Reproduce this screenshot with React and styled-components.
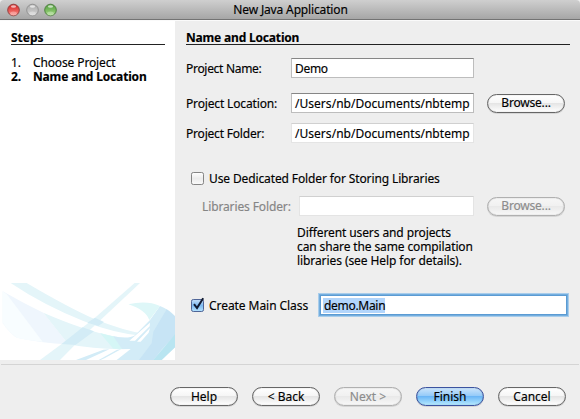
import React from "react";
import styled, { createGlobalStyle } from "styled-components";

const Global = createGlobalStyle`
  * { box-sizing: border-box; }
  body { margin: 0; background: #eee; overflow: hidden; }
`;

const Window = styled.div`
  width: 580px;
  height: 419px;
  display: flex;
  flex-direction: column;
  background: #eee;
  color: #000;
  font: 12px/14px "Noto Sans", "Open Sans", sans-serif;
  -webkit-text-stroke: 0.15px currentColor;
  white-space: nowrap;
`;

const TitleBar = styled.header`
  height: 20px;
  flex: none;
  display: grid;
  grid-template-columns: 64px 1fr 64px;
  align-items: center;
  padding: 0 6px 0 7px;
  border-bottom: 1px solid #737373;
  border-radius: 4px 4px 0 0;
  background: linear-gradient(#cfcfcf, #a6a6a6);
`;

const Lights = styled.div`
  display: flex;
  gap: 5.5px;
`;

const Text = styled.span`
  letter-spacing: ${(p) => p.$ls || 0}px;
  font-weight: ${(p) => (p.$bold ? 700 : 400)};
  color: ${(p) => (p.$dim ? "#858585" : "inherit")};
`;

const Title = styled(Text)`
  justify-self: center;
  line-height: 18px;
  padding-top: 1px;
`;

const Body = styled.div`
  display: flex;
  height: 340px;
  border-top: 1px solid #fafafa;
`;

const Sidebar = styled.aside`
  width: 175px;
  display: flex;
  flex-direction: column;
  background: #fff;
  padding: 10px 10px 0 11px;
`;

const SectionTitle = styled.h2`
  margin: 0;
  height: 14px;
  font-size: 12px;
  line-height: 14px;
  border-bottom: 1px solid #222;
`;

const StepList = styled.ol`
  list-style: none;
  margin: 11px 0 0;
  padding: 0;
`;

const Step = styled.li`
  display: grid;
  grid-template-columns: 22px 1fr;
`;

const Art = styled.svg`
  display: block;
  flex: none;
  margin: auto -10px 0 -11px;
`;

const Main = styled.main`
  flex: 1;
  padding: 10px 10px 0 11px;
`;

const Row = styled.div`
  display: flex;
  align-items: center;
  height: 20px;
  margin-top: ${(p) => p.$top}px;
  padding-left: ${(p) => p.$indent || 0}px;
`;

const Label = styled.label`
  width: ${(p) => p.$w}px;
  flex: none;
  padding-top: 2px;
`;

const Field = styled.div`
  width: ${(p) => p.$w}px;
  height: 20px;
  flex: none;
  padding: 0 3px;
  line-height: 20px;
  overflow: hidden;
  background: #fff;
  border: 1px solid ${(p) => (p.$soft ? "#e4e4e4" : "#bdbdbd")};
  border-top-color: ${(p) => (p.$soft ? "#d0d0d0" : "#868686")};
`;

const FocusField = styled(Field)`
  display: flex;
  align-items: center;
  padding: 0 2px;
  border: 1px solid #5b9bd3;
  box-shadow: 0 0 0 1px #74aede, 0 0 0 2px #a9cdeb;
`;

const Selection = styled(Text)`
  height: 15px;
  line-height: 16px;
  background: #b2d5fb;
  padding-left: 1px;
`;

const faces = {
  normal: ["#666", "#fff 0%, #f6f6f6 45%, #e5e5e5 50%, #fff 100%", "#000"],
  disabled: ["#b0b0b0", "#f6f6f6 0%, #f1f1f1 45%, #e9e9e9 50%, #f8f8f8 100%", "#8c8c8c"],
  primary: ["#3c53a0", "#cbe4fb 0%, #96cbf8 45%, #6bb6f6 50%, #b5e9ff 100%", "#000"],
};

const Button = styled.button`
  width: ${(p) => p.$w || 68}px;
  height: 19px;
  flex: none;
  padding: 0;
  margin-left: ${(p) => p.$left || 0}px;
  border: 1px solid ${(p) => faces[p.$face || "normal"][0]};
  border-radius: 10px;
  background: linear-gradient(${(p) => faces[p.$face || "normal"][1]});
  color: ${(p) => faces[p.$face || "normal"][2]};
  font: inherit;
  line-height: 16px;
  letter-spacing: ${(p) => p.$ls || 0}px;
  box-shadow: inset 0 0 1px rgba(0, 0, 0, 0.4), 0 1px 0 #d6d6d6;
`;

const Note = styled.p`
  margin: 10px 0 0 111px;
  line-height: 14px;
`;

const Line = styled(Text)`
  display: block;
`;

const Footer = styled.footer`
  display: flex;
  gap: 14px;
  margin: 4px 1px 0;
  padding: 22px 13px 0 169px;
  border-top: 1px solid #d4d4d4;
`;

const BoxIcon = styled.svg`
  flex: none;
  display: block;
  margin: 0 5px;
  overflow: visible;
`;

const CheckText = styled(Text)`
  padding-top: 2px;
`;

function Light({ id, edge, top, bottom }) {
  return (
    <svg width="13" height="14" viewBox="0 0 13 14">
      <defs>
        <linearGradient id={id} x2="0" y2="1">
          <stop offset="0" stopColor={top} />
          <stop offset="1" stopColor={bottom} />
        </linearGradient>
      </defs>
      <circle cx="6.5" cy="7" r="5.8" fill={`url(#${id})`} stroke={edge} strokeWidth=".9" />
      <ellipse cx="6.5" cy="3.5" rx="2.6" ry="1.3" fill="#fff" opacity=".65" />
      <ellipse cx="6.5" cy="10.4" rx="3.4" ry="2" fill="#fff" opacity=".3" />
    </svg>
  );
}

function Checkbox({ checked }) {
  const id = checked ? "boxOn" : "boxOff";
  return (
    <BoxIcon width="13" height="13" viewBox="0 0 13 13">
      <defs>
        <linearGradient id={id} x2="0" y2="1">
          <stop offset="0" stopColor={checked ? "#c6dff8" : "#fff"} />
          <stop offset=".5" stopColor={checked ? "#7dbaf2" : "#ececec"} />
          <stop offset="1" stopColor={checked ? "#b6e4ff" : "#fafafa"} />
        </linearGradient>
      </defs>
      <rect x=".5" y=".5" width="12" height="12" rx="1.8" fill={`url(#${id})`} stroke={checked ? "#4f6597" : "#858585"} />
      {checked && <path d="M3 5.2 6 9 12.2-.8" fill="none" stroke="#111b33" strokeWidth="2" />}
    </BoxIcon>
  );
}

function Swirl() {
  return (
    <Art width="175" height="77" viewBox="0 39 525 231">
      <path d="M8 64Q70 100 130 128L205 223Q120 218 50 203Q25 185 8 158Z" fill="#eff6fd" />
      <path d="M8 64L20 72L128 215Q85 212 50 203Q25 185 8 158Z" fill="#f8fdff" />
      <path d="M130 128Q250 180 340 199Q385 208 430 203L392 237Q290 240 205 223Z" fill="#e4f5f9" />
      <path d="M32 39H80Q200 110 285 148Q370 182 435 192V199Q340 190 250 153Q130 105 32 39Z" fill="#e4f5f9" />
      <path d="M404 39H420L260 189L180 270H120L185 222L285 143Z" fill="#e4f5f9" />
      <path d="M285 143L312 156L295 168L262 158ZM248 172L282 184L226 225L185 222Z" fill="#d3ecf6" />
      <path d="M300 189L345 200L366 237L340 236Z" fill="#d5f6f6" />
      <path d="M340 199Q385 208 405 196L450 150L480 108Q510 120 525 139V232L485 270H350L392 237H366Z" fill="#d3ecf7" />
      <path d="M385 103Q440 90 480 108L448 150Q437 120 385 103Z" fill="#def7f8" />
      <path d="M500 118L525 139V195L485 238L460 270H417L455 220L460 185Z" fill="#c7e4f5" />
      <path d="M525 193V232L485 270H460L488 238Z" fill="#b9e5f1" />
      <path d="M450 158L449 169L405 212H388ZM450 174L446 188L422 215H411Z" fill="#fff" />
      <path d="M228 270L310 239L328 238L258 270ZM296 270L350 240L364 237L315 264L302 270Z" fill="#d3ecf7" />
    </Art>
  );
}

export default function App() {
  return (
    <>
      <Global />
      <Window>
        <TitleBar>
          <Lights>
            <Light id="close" edge="#8d3a38" top="#d01c1e" bottom="#ff8f86" />
            <Light id="min" edge="#8d8d8d" top="#a9a9a9" bottom="#d6d6d6" />
            <Light id="zoom" edge="#4b7b3c" top="#4f9a3d" bottom="#a5dc83" />
          </Lights>
          <Title $ls={-0.15}>New Java Application</Title>
        </TitleBar>
        <Body>
          <Sidebar>
            <SectionTitle><Text $bold>Steps</Text></SectionTitle>
            <StepList>
              <Step><Text>1.</Text><Text $ls={-0.13}>Choose Project</Text></Step>
              <Step><Text $bold>2.</Text><Text $bold $ls={-0.16}>Name and Location</Text></Step>
            </StepList>
            <Swirl />
          </Sidebar>
          <Main>
            <SectionTitle><Text $bold $ls={-0.18}>Name and Location</Text></SectionTitle>
            <Row $top={13}>
              <Label $w={105}><Text $ls={-0.3}>Project Name:</Text></Label>
              <Field $w={183}><Text $ls={-0.3}>Demo</Text></Field>
            </Row>
            <Row $top={15}>
              <Label $w={105}><Text $ls={-0.15}>Project Location:</Text></Label>
              <Field $w={183}><Text $ls={0.03}>/Users/nb/Documents/nbtemp</Text></Field>
              <Button $w={78} $left={13} $ls={-0.2}>Browse...</Button>
            </Row>
            <Row $top={10}>
              <Label $w={105}><Text $ls={-0.2}>Project Folder:</Text></Label>
              <Field $w={183} $soft><Text $ls={0.03}>/Users/nb/Documents/nbtemp</Text></Field>
            </Row>
            <Row $top={25}>
              <Checkbox />
              <CheckText $ls={-0.12}>Use Dedicated Folder for Storing Libraries</CheckText>
            </Row>
            <Row $top={8} $indent={16}>
              <Label $w={97}><Text $dim $ls={-0.12}>Libraries Folder:</Text></Label>
              <Field $w={175} $soft />
              <Button $w={78} $left={13} $ls={-0.2} $face="disabled" disabled>Browse...</Button>
            </Row>
            <Note>
              <Line $ls={-0.1}>Different users and projects</Line>
              <Line $ls={-0.12}>can share the same compilation</Line>
              <Line $ls={-0.08}>libraries (see Help for details).</Line>
            </Note>
            <Row $top={27}>
              <Checkbox checked />
              <Label $w={111}><Text $ls={-0.06}>Create Main Class</Text></Label>
              <FocusField $w={247}><Selection $ls={-0.3}>demo.Main</Selection></FocusField>
            </Row>
          </Main>
        </Body>
        <Footer>
          <Button>Help</Button>
          <Button>&lt; Back</Button>
          <Button $face="disabled" disabled>Next &gt;</Button>
          <Button $face="primary">Finish</Button>
          <Button>Cancel</Button>
        </Footer>
      </Window>
    </>
  );
}
